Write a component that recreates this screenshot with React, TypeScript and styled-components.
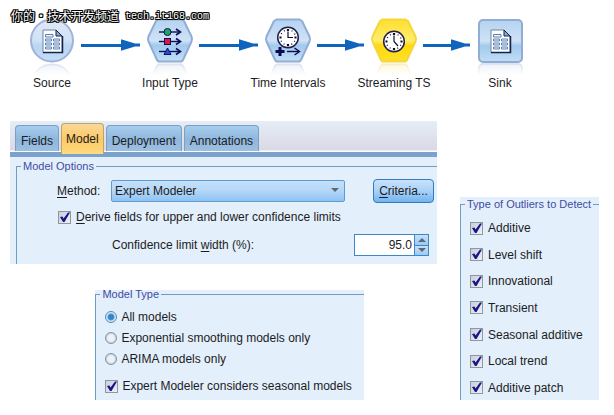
import React, { useState } from "react";
import styled, { createGlobalStyle, css } from "styled-components";

const GlobalStyle = createGlobalStyle`
  * { box-sizing: border-box; }
  body {
    margin: 0;
    background: #fff;
    color: #1c1c24;
    font: 12px/14px "Liberation Sans", Arial, sans-serif;
  }
  button, input, select { font: inherit; color: inherit; margin: 0; }
`;

const Page = styled.main`
  position: relative;
  padding: 16px 0 15px;
`;

const Watermark = styled.div`
  position: absolute;
  z-index: 1;
  top: 8px;
  left: 11px;
  display: flex;
  gap: 6px;
  white-space: nowrap;
  color: #fff;
  font: 12px/16px "Noto Sans CJK SC", sans-serif;
  text-shadow: 1px 0 #000, -1px 0 #000, 0 1px #000, 0 -1px #000,
    1px 1px #000, -1px -1px #000, 1px -1px #000, -1px 1px #000;
`;

const WatermarkSite = styled.span`
  font: 10px/18px "Liberation Mono", monospace;
`;

const WatermarkDot = styled.span`
  display: inline-block;
  width: 12px;
  text-align: center;
`;

/* ---------- stream ---------- */

const Stream = styled.section`
  display: grid;
  grid-template-columns: 48px 70fr 48px 70fr 48px 58fr 48px 58fr 48px;
  padding: 0 90px 0 28px;
`;

const Node = styled.figure`
  display: flex;
  flex-direction: column;
  align-items: center;
  margin: 0;
  svg { display: block; flex: none; }
`;

const NodeLabel = styled.figcaption`
  white-space: nowrap;
`;

const Connector = styled.div`
  display: flex;
  align-items: center;
  height: 58px;
  padding: 0 6px 0 5px;
  svg { display: block; flex: none; }
`;

const ConnectorLine = styled.span`
  flex: 1;
  height: 3px;
  background: #0f64be;
`;

const Arrow = () => (
  <Connector>
    <ConnectorLine />
    <svg width="19" height="12" viewBox="0 0 19 12" aria-hidden="true">
      <path d="M0 0.3 L14 4.6 H19 V7.4 H14 L0 11.7Z" fill="#0f64be" />
    </svg>
  </Connector>
);

const HEX = "M12.5 3.5 H35.5 L38 5 L45.5 20.5 Q46.5 23 45.5 25.5 L37 44 L35.5 45.5 H12.5 L11 44 L2.5 25.5 Q1.5 23 2.5 20.5 L10 5Z";

type Shape = "circle" | "hex" | "square";

const Plate = ({ id, shape, gold }: { id: string; shape: Shape; gold?: boolean }) => {
  const stroke = gold ? "#f6d638" : shape === "circle" ? "#a3b2da" : "#91add6";
  const outline = (fill: string, line: string) =>
    shape === "circle" ? (
      <circle cx="24" cy="24.5" r="21" fill={fill} stroke={line} strokeWidth="2" />
    ) : shape === "square" ? (
      <rect x="3" y="4" width="43" height="42" rx="4" fill={fill} stroke={line} strokeWidth="2" />
    ) : (
      <path d={HEX} fill={fill} stroke={line} strokeWidth="2" strokeLinejoin="round" />
    );
  return (
    <>
      <defs>
        <linearGradient id={`${id}-fill`} x1="0" y1="0" x2="0" y2="1">
          <stop offset="0" stopColor={gold ? "#ffe02c" : shape === "circle" ? "#e0e8f6" : "#b5d3f0"} />
          <stop offset="0.5" stopColor={gold ? "#ffec70" : "#cfe2f6"} />
          <stop offset="0.62" stopColor={gold ? "#ffd90c" : shape === "circle" ? "#b9d6f2" : "#a2caed"} />
          <stop offset="1" stopColor={gold ? "#ffe02a" : "#c2def5"} />
        </linearGradient>
        <linearGradient id={`${id}-fade`} x1="0" y1="46" x2="0" y2="59" gradientUnits="userSpaceOnUse">
          <stop offset="0" stopColor="#fff" stopOpacity="0.3" />
          <stop offset="1" stopColor="#fff" />
        </linearGradient>
        <clipPath id={`${id}-clip`}>
          <rect x="0" y="47" width="48" height="13" />
        </clipPath>
      </defs>
      <g clipPath={`url(#${id}-clip)`}>
        <g transform="translate(0 94) scale(1 -1)">
          {outline(gold ? "#fff6c2" : "#e3ebf5", gold ? "#f3e3a0" : "#c6d0e4")}
        </g>
        <rect x="0" y="46" width="48" height="14" fill={`url(#${id}-fade)`} />
      </g>
      {outline(`url(#${id}-fill)`, stroke)}
    </>
  );
};

const Sheet = () => (
  <g>
    <path d="M15 14 H28 L34 20 V36.500 H15Z" fill="#fdfeff" stroke="#75829c" strokeWidth="1" />
    <path d="M34.500 20 V36.500 H15" fill="none" stroke="#17214b" strokeWidth="1.500" />
    <path d="M28 14 V20 H34Z" fill="#8ea8d2" stroke="#17214b" strokeWidth="1" />
    <path
      d="M17.500 18.500 H25 V21 H17.500Z M17.500 23 H23.500 V25 H17.500Z M25.500 23 H31.500 V25 H25.500Z M17.500 27 H23.500 V29 H17.500Z M25.500 27 H31.500 V29 H25.500Z M17.500 31 H23.500 V33 H17.500Z M25.500 31 H31.500 V33 H25.500Z"
      fill="#eef4fc"
      stroke="#5c82b4"
      strokeWidth="1"
    />
  </g>
);

const Clock = ({ cy, late }: { cy: number; late?: boolean }) => (
  <g transform={`translate(24 ${cy})`}>
    <circle r="10.300" fill="#fff" stroke="#20204e" strokeWidth="1.500" />
    <circle r="7.600" fill="none" stroke="#14142a" strokeWidth="1.300" strokeDasharray="1 2.980" strokeDashoffset="0.5" />
    <path d="M-1 -7.500 H1 M0 -8.500 V-6.500 M0 6.500 V8.800 M-8.500 0 H-6.500 M6.500 0 H8.500" stroke="#10101c" strokeWidth="2.200" />
    <path d={late ? "M0 -6 V0 L4 4.500" : "M0 -6 V0 H5"} fill="none" stroke="#10102c" strokeWidth="1.200" />
  </g>
);

const TypeRows = () => (
  <g stroke="#0b0f58" fill="none" strokeWidth="1.400">
    {[16, 25.5, 35.5].map((y) => (
      <g key={y}>
        <path d={`M13 ${y} H34`} />
        <path d={`M30 ${y - 3} L34.500 ${y} L30 ${y + 3}`} strokeWidth="1.600" />
      </g>
    ))}
    <circle cx="21.500" cy="16" r="3.500" fill="#1da765" strokeWidth="1" />
    <rect x="18.500" y="22.500" width="6" height="6" fill="#dd1745" strokeWidth="1" />
    <path d="M21.500 32 L25 38.500 H18Z" fill="#2350dc" strokeWidth="1" />
  </g>
);

const PlusArrow = () => (
  <g stroke="#0a0a50" fill="none">
    <path d="M11.500 35.500 H20.500 M16 31 V40" strokeWidth="3" />
    <path d="M23 35.500 H35" strokeWidth="1.400" />
    <path d="M30.500 32 L35.500 35.500 L30.500 39" strokeWidth="1.400" />
  </g>
);

const StreamNode = ({ id, label, shape, gold, children }: {
  id: string; label: string; shape: Shape; gold?: boolean; children: React.ReactNode;
}) => (
  <Node>
    <svg width="48" height="60" viewBox="0 0 48 60" aria-hidden="true">
      <Plate id={id} shape={shape} gold={gold} />
      {children}
    </svg>
    <NodeLabel>{label}</NodeLabel>
  </Node>
);

/* ---------- panels ---------- */

const Workspace = styled.div`
  display: grid;
  grid-template-columns: minmax(0, 427fr) minmax(0, 139fr);
  gap: 23px;
  padding: 31px 15px 0 10px;
`;

const Panel = styled.section<{ $inset?: boolean; $tall?: boolean }>`
  background: #e3effb;
  ${(p) => p.$inset && css`margin: 26px 17% 0 20%;`}
  ${(p) => p.$tall && css`
    display: flex;
    flex-direction: column;
    margin-top: 76px;
    padding-top: 3px;
  `}
`;

const Group = styled.fieldset<{ $grow?: boolean }>`
  min-width: 0;
  margin: 0;
  border: 0 solid #6f9dc2;
  border-width: 1px 0 0 1px;
  padding: 0;
  ${(p) => p.$grow && css`flex: 1;`}
`;

const Legend = styled.legend`
  margin-left: 4px;
  padding: 0 2px;
  color: #3f4ba3;
  font-size: 11px;
  line-height: 8px;
  white-space: nowrap;
`;

const Tabs = styled.div`
  display: flex;
  align-items: flex-end;
  gap: 2px;
  height: 36px;
  padding: 0 5px;
  border-bottom: 5px solid #7aa2cd;
  background: linear-gradient(#e5edf7, #d9d9e5 29px, #fff 30px);
`;

const Tab = styled.button<{ $active?: boolean }>`
  height: 26px;
  margin-bottom: 1px;
  padding: 5px 5px 0;
  border: 1px solid #7ba0c4;
  border-bottom: 0;
  border-radius: 4px 4px 0 0;
  background: linear-gradient(#a6cdec, #8fb7dd 55%, #9dc0e1);
  white-space: nowrap;
  ${(p) => p.$active && css`
    height: 31px;
    margin-bottom: -2px;
    padding: 0 4px;
    border-color: #c3a15e;
    background: linear-gradient(#f8d99a, #fdc965 50%, #ffd980);
  `}
`;

const Accel = styled.u`
  text-underline-offset: 2px;
`;

const OptionsBody = styled.div`
  padding: 5px 0 0 6px;
`;

const MethodRow = styled.div`
  display: flex;
  align-items: center;
  padding: 9px 3px 0 40px;
`;

const MethodLabel = styled.label`
  width: 54px;
`;

const SelectBox = styled.div`
  position: relative;
  flex: 1;
  margin-right: 28px;
  svg { position: absolute; top: 8px; right: 6px; pointer-events: none; }
`;

const Select = styled.select`
  display: block;
  width: 100%;
  height: 22px;
  padding: 0 20px 0 3px;
  appearance: none;
  border: 1px solid #5d9bd3;
  border-radius: 2px;
  background: linear-gradient(#c5e0f9, #b6d8f8 45%, #8fc3f3);
`;

const CriteriaButton = styled.button`
  width: 61px;
  height: 24px;
  padding: 0;
  border: 1px solid #2f7cc0;
  border-radius: 4px;
  background: linear-gradient(#c8e2fb, #a9d1f7 50%, #74b3f0);
`;

const CheckLabel = styled.label<{ $gap: number }>`
  display: flex;
  align-items: center;
  gap: ${(p) => p.$gap}px;
  white-space: nowrap;
`;

const DeriveRow = styled.div`
  padding: 7px 0 0 41px;
`;

const BoxWrap = styled.span`
  display: grid;
  flex: none;
  > * { grid-area: 1 / 1; }
  svg { pointer-events: none; z-index: 1; }
`;

const Box = styled.input`
  width: 13px;
  height: 13px;
  appearance: none;
  border: 1px solid #8f979f;
  background: linear-gradient(135deg, #c8cedb, #edf0f8);
`;

const Check = ({ gap = 5, children }: { gap?: number; children: React.ReactNode }) => {
  const [on, setOn] = useState(true);
  return (
    <CheckLabel $gap={gap}>
      <BoxWrap>
        <Box type="checkbox" checked={on} onChange={() => setOn(!on)} />
        {on && (
          <svg width="13" height="13" viewBox="0 0 13 13" aria-hidden="true">
            <path d="M2 6 L4.500 5.500 L5.500 7.500 L10 1.500 L12 1.500 L6.500 11 H5Z" fill="#1b1484" />
          </svg>
        )}
      </BoxWrap>
      <span>{children}</span>
    </CheckLabel>
  );
};

const ConfidenceRow = styled.div`
  display: flex;
  align-items: center;
  justify-content: space-between;
  padding: 10px 8px 8px 95px;
`;

const Spinner = styled.div`
  display: grid;
  grid-template-columns: 1fr 14px;
  width: 75px;
  height: 22px;
  border: 1px solid #3f86c6;
  background: #fff;
`;

const SpinInput = styled.input`
  width: 100%;
  min-width: 0;
  padding: 0 2px;
  border: 0;
  background: transparent;
  text-align: right;
`;

const SpinButtons = styled.div`
  display: grid;
  grid-template-rows: 1fr 1fr;
  gap: 1px;
  border-left: 1px solid #3f86c6;
  background: #3f86c6;
`;

const SpinButton = styled.button`
  display: grid;
  place-items: center;
  padding: 0;
  border: 0;
  background: linear-gradient(#c6e1fa, #9bcaf5);
`;

const ModelBody = styled.div`
  padding: 12px 0 7px 9px;
`;

const ModelTypes = styled.div`
  display: flex;
  flex-direction: column;
  gap: 7px;
  padding-bottom: 13px;
`;

const Radio = styled.input`
  flex: none;
  width: 12px;
  height: 12px;
  appearance: none;
  border: 1px solid #8195a8;
  border-radius: 50%;
  background: radial-gradient(circle, #eef2f6 3px, #c5d1dc 5px);
  &:checked {
    border-color: #6186a8;
    background: radial-gradient(circle, #2f86cc 2px, #4597d8 3px, #d6e6f3 4px);
  }
`;

const Outliers = styled.div`
  display: flex;
  flex-direction: column;
  justify-content: space-between;
  height: 100%;
  padding: 13px 0 5px 9px;
`;

const Triangle = ({ up }: { up?: boolean }) => (
  <svg width="8" height="4" viewBox="0 0 8 4" aria-hidden="true">
    <path d={up ? "M0 4 L4 0 L8 4Z" : "M0 0 H8 L4 4Z"} fill="#5d6876" />
  </svg>
);

const TABS = ["Fields", "Model", "Deployment", "Annotations"];
const MODELS = ["All models", "Exponential smoothing models only", "ARIMA models only"];
const OUTLIERS = ["Additive", "Level shift", "Innovational", "Transient", "Seasonal additive", "Local trend", "Additive patch"];

export default function App() {
  const [tab, setTab] = useState("Model");
  const [model, setModel] = useState(MODELS[0]);
  const [width, setWidth] = useState("95.0");
  const step = (by: number) => setWidth((Number(width) + by).toFixed(1));

  return (
    <>
      <GlobalStyle />
      <Page>
        <Watermark>
          <span>你的<WatermarkDot>·</WatermarkDot>技术开发频道</span>
          <WatermarkSite>tech.it168.com</WatermarkSite>
        </Watermark>

        <Stream>
          <StreamNode id="source" label="Source" shape="circle"><Sheet /></StreamNode>
          <Arrow />
          <StreamNode id="type" label="Input Type" shape="hex"><TypeRows /></StreamNode>
          <Arrow />
          <StreamNode id="time" label="Time Intervals" shape="hex"><Clock cy={21.5} /><PlusArrow /></StreamNode>
          <Arrow />
          <StreamNode id="ts" label="Streaming TS" shape="hex" gold><Clock cy={25.5} late /></StreamNode>
          <Arrow />
          <StreamNode id="sink" label="Sink" shape="square"><Sheet /></StreamNode>
        </Stream>

        <Workspace>
          <div>
            <Panel>
              <Tabs role="tablist">
                {TABS.map((t) => (
                  <Tab key={t} role="tab" aria-selected={t === tab} $active={t === tab} onClick={() => setTab(t)}>
                    {t}
                  </Tab>
                ))}
              </Tabs>
              <OptionsBody>
                <Group>
                  <Legend>Model Options</Legend>
                  <MethodRow>
                    <MethodLabel htmlFor="method"><Accel>M</Accel>ethod:</MethodLabel>
                    <SelectBox>
                      <Select id="method"><option>Expert Modeler</option></Select>
                      <Triangle />
                    </SelectBox>
                    <CriteriaButton><Accel>C</Accel>riteria...</CriteriaButton>
                  </MethodRow>
                  <DeriveRow>
                    <Check><Accel>D</Accel>erive fields for upper and lower confidence limits</Check>
                  </DeriveRow>
                  <ConfidenceRow>
                    <label htmlFor="confidence">Confidence limit <Accel>w</Accel>idth (%):</label>
                    <Spinner>
                      <SpinInput id="confidence" value={width} onChange={(e) => setWidth(e.target.value)} />
                      <SpinButtons>
                        <SpinButton aria-label="Increase" onClick={() => step(1)}><Triangle up /></SpinButton>
                        <SpinButton aria-label="Decrease" onClick={() => step(-1)}><Triangle /></SpinButton>
                      </SpinButtons>
                    </Spinner>
                  </ConfidenceRow>
                </Group>
              </OptionsBody>
            </Panel>

            <Panel $inset>
              <Group>
                <Legend>Model Type</Legend>
                <ModelBody>
                  <ModelTypes>
                    {MODELS.map((m) => (
                      <CheckLabel key={m} $gap={4}>
                        <Radio type="radio" name="model" checked={m === model} onChange={() => setModel(m)} />
                        <span>{m}</span>
                      </CheckLabel>
                    ))}
                  </ModelTypes>
                  <Check gap={4}>Expert Modeler considers seasonal models</Check>
                </ModelBody>
              </Group>
            </Panel>
          </div>

          <Panel $tall>
            <Group $grow>
              <Legend>Type of Outliers to Detect</Legend>
              <Outliers>
                {OUTLIERS.map((o) => <Check key={o}>{o}</Check>)}
              </Outliers>
            </Group>
          </Panel>
        </Workspace>
      </Page>
    </>
  );
}
